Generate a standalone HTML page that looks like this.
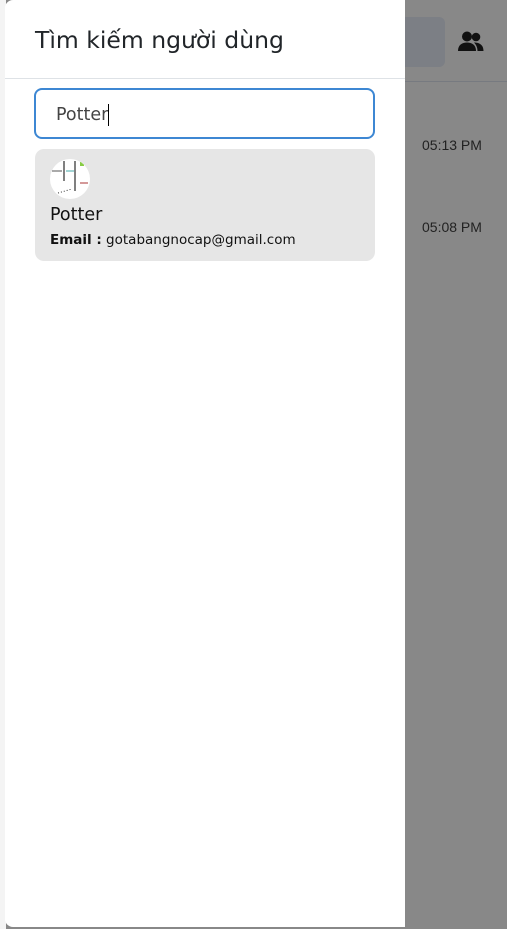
<!DOCTYPE html>
<html><head><meta charset="utf-8"><style>
body{margin:0;width:507px;height:929px;background:#888;position:relative;overflow:hidden;font-family:"Liberation Sans","DejaVu Sans",sans-serif}
.left{position:absolute;left:0;top:0;width:6px;height:929px;background:#f4f4f4}
.box{position:absolute;left:395px;top:17px;width:50px;height:50px;background:#7c7f85;border-radius:6px}
.hline{position:absolute;left:405px;top:81px;width:102px;height:1px;background:#777a80}
.t{position:absolute;left:422px;font-size:14px;color:#222}
.drawer{position:absolute;left:5px;top:0;width:400px;height:927px;background:#fff;border-radius:8px 0 0 8px}
h1{position:absolute;left:30px;top:26px;margin:0;font-weight:normal;color:#212529;font-family:"DejaVu Sans",sans-serif;font-size:23.5px}
.div{position:absolute;left:0;top:78px;width:400px;height:1px;background:#dee2e6}
.inp{position:absolute;left:29px;top:88px;height:47px;border:2px solid #3d87d3;border-radius:8px;color:#444;line-height:50px;padding-left:20px;width:317px;font-family:"DejaVu Sans",sans-serif;font-size:17.5px}
.card{position:absolute;left:30px;top:149px;width:340px;height:112px;background:#e6e6e6;border-radius:9px}
.av{position:absolute;left:15px;top:10px;width:40px;height:40px;border-radius:50%;background:#fff;overflow:hidden}
.name{position:absolute;left:15px;top:56px;font-size:17.5px;color:#111;font-family:"DejaVu Sans",sans-serif}
.em{position:absolute;left:15px;top:83px;font-size:13.5px;color:#111;font-family:"DejaVu Sans",sans-serif}
</style></head><body>
<div class="left"></div>
<div class="box"></div>
<svg style="position:absolute;left:457px;top:31px" width="28" height="22" viewBox="0 0 28 22"><circle cx="10" cy="5.5" r="5" fill="#111"/><circle cx="19" cy="6" r="4.3" fill="#111"/><path d="M1 20c0-6 4-8.5 9-8.5s9 2.5 9 8.5z" fill="#111"/><path d="M17 11.5c5 0 9.5 2 9.5 8.5h-6c0-3-1-6-3.5-8.5z" fill="#111"/></svg>
<div class="hline"></div>
<div class="t" style="top:137px">05:13 PM</div>
<div class="t" style="top:219px">05:08 PM</div>
<div class="drawer">
<h1>Tìm kiếm người dùng</h1>
<div class="div"></div>
<div class="inp">Potter<span style="display:inline-block;width:1px;height:22px;background:#000;vertical-align:middle"></span></div>
<div class="card">
<div class="av"><svg width="40" height="40"><line x1="14" y1="2" x2="14" y2="22" stroke="#000"/><line x1="25" y1="2" x2="25" y2="32" stroke="#000"/><rect x="30" y="3" width="4" height="4" fill="#8c4"/><line x1="2" y1="12" x2="12" y2="12" stroke="#555"/><line x1="16" y1="12" x2="24" y2="12" stroke="#4aa"/><line x1="30" y1="24" x2="38" y2="24" stroke="#a33"/><line x1="8" y1="34" x2="22" y2="30" stroke="#333" stroke-dasharray="1 2"/></svg></div>
<div class="name">Potter</div>
<div class="em"><b>Email :</b> gotabangnocap@gmail.com</div>
</div>
</div>
</body></html>
